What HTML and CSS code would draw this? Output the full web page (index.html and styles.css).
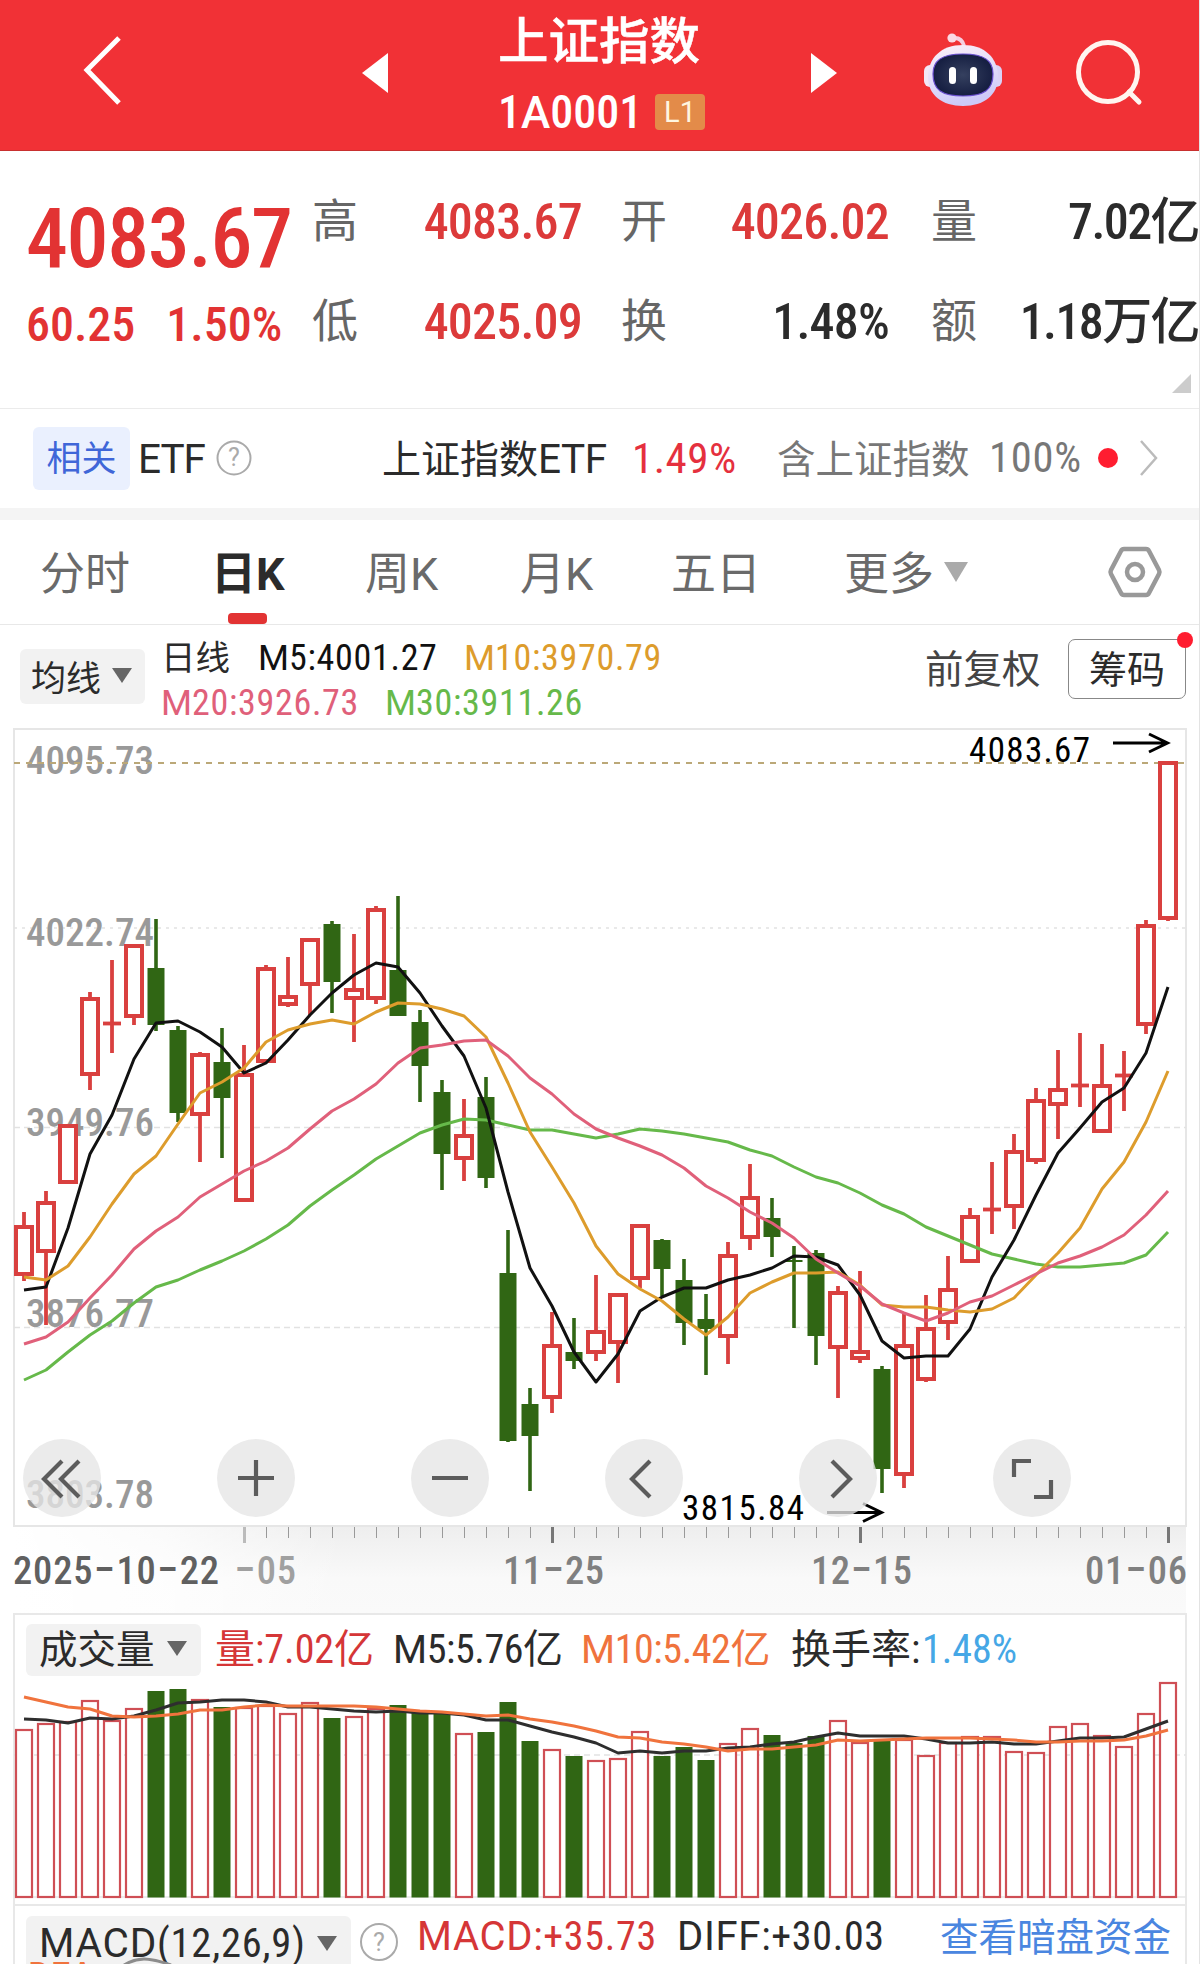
FILE: index.html
```
<!DOCTYPE html>
<html lang="zh-CN">
<head>
<meta charset="utf-8">
<title>上证指数</title>
<link rel="stylesheet" href="styles.css">
</head>
<body>
<main class="page">
  <header class="top">
    <svg class="back" viewBox="0 0 60 151"><path d="M49 38 17 70l32 33"/></svg>
    <svg class="tri" viewBox="0 0 30 151"><path d="M28 53v40L2 73z"/></svg>
    <div class="title">
      <h1>上证指数</h1>
      <div class="code"><span>1<i>A</i>0001</span><b>L1</b></div>
    </div>
    <svg class="tri" viewBox="0 0 30 151"><path d="M1 53v40l26-20z"/></svg>
    <svg class="robot" viewBox="920 30 86 80">
      <defs>
        <linearGradient id="shell" x1="0" y1="0" x2="0.3" y2="1"><stop offset="0" stop-color="#fdf0f8"/><stop offset=".6" stop-color="#e2dcfa"/><stop offset="1" stop-color="#cdcaf8"/></linearGradient>
        <radialGradient id="face"><stop offset="0" stop-color="#35405f"/><stop offset="1" stop-color="#161f42"/></radialGradient>
      </defs>
      <path d="M953 38q9-1 11 8" fill="none" stroke="#f6cfe0" stroke-width="4"/>
      <circle cx="952" cy="38" r="4.600" fill="#fbd9e4"/>
      <rect x="924" y="65" width="14" height="22" rx="6" fill="#f3e6f6"/>
      <rect x="988" y="65" width="14" height="22" rx="6" fill="#d9d2f6"/>
      <path d="M963 45c22 0 35 13 35 32 0 18-14 29-35 29s-35-11-35-29c0-19 13-32 35-32z" fill="url(#shell)"/>
      <path d="M963 54c22 0 30 7 30 20 0 16-9 22-30 22s-30-6-30-22c0-13 8-20 30-20z" fill="url(#face)" stroke="#6a4fd0" stroke-width="1.200"/>
      <rect x="949" y="67" width="7" height="17" rx="3.500" fill="#fff"/>
      <rect x="970" y="67" width="7" height="17" rx="3.500" fill="#fff"/>
    </svg>
    <svg class="search" viewBox="1070 30 76 80"><circle cx="1107" cy="72" r="29.500"/><path d="m1128 92 10 10"/></svg>
  </header>

  <section class="quote">
    <div class="last">
      <strong>4083.67</strong>
      <div class="chg"><span>60.25</span><span>1.50%</span></div>
    </div>
    <dl>
      <dt>高</dt><dd class="up">4083.67</dd>
      <dt>开</dt><dd class="up">4026.02</dd>
      <dt>量</dt><dd>7.02亿</dd>
      <dt>低</dt><dd class="up">4025.09</dd>
      <dt>换</dt><dd>1.48%</dd>
      <dt>额</dt><dd>1.18万亿</dd>
    </dl>
    <span class="corner"></span>
  </section>

  <section class="etf">
    <span class="tag">相关</span>
    <span class="name"><i>ETF</i></span>
    <svg class="help" viewBox="0 0 40 40"><circle cx="20" cy="20" r="16.500"/><text x="20" y="28">?</text></svg>
    <span class="fund">上证指数<i>ETF</i></span>
    <span class="pct">1.49%</span>
    <span class="hold">含上证指数</span>
    <span class="share">100%</span>
    <span class="dot"></span>
    <svg class="more" viewBox="0 0 20 40"><path d="m2 3 15 17L2 37"/></svg>
  </section>

  <nav class="tabs">
    <span>分时</span>
    <span class="on">日<i>K</i></span>
    <span>周<i>K</i></span>
    <span>月<i>K</i></span>
    <span>五日</span>
    <span>更多</span>
    <svg class="caret" viewBox="0 0 24 20"><path d="M0 0h24L12 20z"/></svg>
    <svg class="gear" viewBox="0 0 56 56"><path d="M17 5h22q2 0 3 2l10 19q1 2 0 4L42 49q-1 2-3 2H17q-2 0-3-2L4 30q-1-2 0-4L14 7q1-2 3-2z"/><circle cx="28" cy="28" r="8"/></svg>
  </nav>

  <section class="legend">
    <span class="chip">均线<svg viewBox="0 0 20 15"><path d="M0 0h20L10 15z"/></svg></span>
    <div class="mas">
      <span class="kind">日线</span><span class="m5"><i>M</i>5:4001.27</span><span class="m10"><i>M</i>10:3970.79</span>
      <span class="m20"><i>M</i>20:3926.73</span><span class="m30"><i>M</i>30:3911.26</span>
    </div>
    <span class="adj">前复权</span>
    <span class="chips">筹码<em></em></span>
  </section>

  <section class="chart">
    <svg id="kline" viewBox="0 726 1200 887">
      <defs>
        <linearGradient id="axis" x1="0" y1="0" x2="0" y2="1"><stop offset="0" stop-color="#eee"/><stop offset=".6" stop-color="#f9f9f9"/><stop offset="1" stop-color="#fafafa"/></linearGradient>
        <linearGradient id="fade"><stop offset="0" stop-color="#fff"/><stop offset=".45" stop-color="#fff" stop-opacity=".75"/><stop offset="1" stop-color="#fff" stop-opacity="0"/></linearGradient>
      </defs>
      <rect x="14" y="1527" width="1172" height="86" fill="url(#axis)"/>
      <rect x="14" y="1527" width="330" height="86" fill="url(#fade)"/>
      <rect class="frame" x="14" y="729" width="1172" height="797"/>
      <path class="grid" d="M14 1127.500H1186M14 1327.500H1186"/>
      <path class="grid dots" d="M14 928H1186"/>
      <g class="price">
        <text x="26" y="774" textLength="128">4095.73</text>
        <text x="26" y="946" textLength="128">4022.74</text>
        <text x="26" y="1136" textLength="128">3949.76</text>
        <text x="26" y="1327" textLength="128">3876.77</text>
        <text x="26" y="1508" textLength="128">3803.78</text>
      </g>
      <path class="top-line" d="M14 763H1186"/>
      <g id="candles"></g>
      <g class="mark">
        <text x="969" y="762" textLength="121">4083.67</text>
        <path d="M1113 743h54m-18-9 18.500 9-18.500 9"/>
        <text x="682" y="1520" textLength="122">3815.84</text>
        <path d="M827 1512.500h54m-18-9 18.500 9-18.500 9"/>
      </g>
      <g id="ticks"></g>
      <g class="date">
        <text x="13" y="1584" textLength="206" class="first">2025<tspan>-</tspan>10<tspan>-</tspan>22</text>
        <text x="234" y="1584" textLength="62" class="pale"><tspan>-</tspan>05</text>
        <text x="503" y="1584" textLength="101">11<tspan>-</tspan>25</text>
        <text x="811" y="1584" textLength="101">12<tspan>-</tspan>15</text>
        <text x="1085" y="1584" textLength="102">01<tspan>-</tspan>06</text>
      </g>
    </svg>
    <div class="controls">
      <svg viewBox="0 0 78 78"><path d="M39 22 21 40l18 18M56 22 38 40l18 18"/></svg>
      <svg viewBox="0 0 78 78"><path d="M39 21v36M21 39h36"/></svg>
      <svg viewBox="0 0 78 78"><path d="M21 39h36"/></svg>
      <svg viewBox="0 0 78 78"><path d="M45 22 27 40l18 18"/></svg>
      <svg viewBox="0 0 78 78"><path d="m33 22 18 18-18 18"/></svg>
      <svg viewBox="0 0 78 78"><path d="M21 38V22h17M58 41v17H41"/></svg>
    </div>
  </section>

  <section class="volume">
    <div class="bar">
      <span class="chip">成交量<svg viewBox="0 0 20 15"><path d="M0 0h20L10 15z"/></svg></span>
      <span class="v1">量:7.02亿</span>
      <span class="v2"><i>M</i>5:5.76亿</span>
      <span class="v3"><i>M</i>10:5.42亿</span>
      <span class="v4">换手率:</span>
      <span class="v5">1.48%</span>
    </div>
    <svg id="vol" viewBox="13 1677 1174 227"><path class="grid" d="M14 1755H1186"/><path class="base" d="M14 1897H1186"/></svg>
  </section>

  <section class="macd">
    <span class="chip"><span><i>MACD</i>(12,26,9)</span><svg viewBox="0 0 20 15"><path d="M0 0h20L10 15z"/></svg></span>
    <svg class="help" viewBox="0 0 40 40"><circle cx="20" cy="20" r="18"/><text x="20" y="29">?</text></svg>
    <span class="d1"><i>MACD</i>:+35.73</span>
    <span class="d2"><i>DIFF</i>:+30.03</span>
    <a>查看暗盘资金</a>
    <svg class="peek" viewBox="14 1955 240 9"><text x="28" y="1991">DEA</text><path d="M124 1965q10-6 20-6t27 6"/></svg>
  </section>
</main>
<script src="chart.js"></script>
</body>
</html>
```

FILE: styles.css
```
* { box-sizing: border-box; margin: 0; padding: 0; }
body {
  width: 1200px; height: 1964px; overflow: hidden; background: #fff; color: #2b2b2b;
  font-family: "Roboto Condensed", "Noto Sans CJK SC", sans-serif;
}
i { font-family: Roboto, sans-serif; font-style: normal; }
svg { display: block; flex: none; }
span { white-space: nowrap; }
.page { width: 1200px; height: 1964px; overflow: hidden; display: flex; flex-direction: column; border-right: 1px solid #e3e3e3; }
.page > * { flex: none; }

.top { height: 151px; width: 1200px; background: #f13136; display: flex; color: #fff; border-bottom: 1px solid #c8302f; }
.top svg { height: 151px; }
.back { width: 60px; margin-left: 70px; fill: none; stroke: #fff; stroke-width: 5; }
.tri { width: 30px; fill: #fff; }
.back + .tri { margin-left: 230px; }
.title { width: 220px; margin: 0 90px 0 108px; padding-right: 0; }
.title + .tri { margin-left: 2px; }
.title h1 { height: 82px; padding-top: 9px; font: 500 50.5px/56px "Noto Sans CJK SC", sans-serif; -webkit-text-stroke: 0.5px #fff; }
.code { display: flex; align-items: center; height: 60px; }
.code span { width: 157px; font-size: 46px; font-weight: 500; line-height: 62px; padding-top: 1px; }
.code i { font-size: 44px; }
.code b { width: 50px; height: 36px; border-radius: 4px; background: #e38b49; color: #fff6e0; font: 400 29px/36px Roboto, sans-serif; text-align: center; }
.top .robot { width: 86px; height: 80px; margin: 30px 0 0 80px; }
.top .search { width: 76px; height: 80px; margin: 30px 0 0 65px; fill: none; stroke: #fff5f0; stroke-width: 5; stroke-linecap: round; }

.quote { height: 258px; display: flex; position: relative; border-bottom: 1px solid #ebebeb; }
.last { width: 312px; padding: 46px 0 0 26px; color: #e23333; }
.last strong { display: block; font-size: 84px; font-weight: 500; line-height: 84px; letter-spacing: -1.4px; }
.chg { display: flex; gap: 31px; padding-top: 12px; font-size: 48px; font-weight: 500; line-height: 64px; }
.quote dl { width: 886px; display: grid; grid-template-columns: 45px 225px 85px 222px 88px 222px; grid-template-rows: 100px 100px; padding-top: 22px; }
.quote dt { font-size: 46px; color: #666; line-height: 88px; font-family: "Noto Sans CJK SC", sans-serif; text-align: right; }
.quote dd { font-size: 50px; font-weight: 500; line-height: 98px; text-align: right; letter-spacing: -0.8px; white-space: nowrap; }
.quote dd:nth-of-type(3n) { letter-spacing: -1.6px; }
.quote .up { color: #dc3a3a; }
.corner { position: absolute; right: 8px; bottom: 15px; border-style: solid; border-width: 0 0 19px 19px; border-color: transparent transparent #ccc; }

.etf { height: 111px; display: flex; align-items: center; padding: 0 0 1px 33px; border-bottom: 12px solid #f4f4f4; font-size: 39px; line-height: 60px; }
.tag { width: 97px; height: 63px; border-radius: 6px; background: #eaf0fe; color: #3f66d8; font-size: 35px; line-height: 66px; text-align: center; }
.name { width: 84px; padding: 2px 0 0 8px; font-size: 40.5px; letter-spacing: -1px; }
.help { width: 40px; height: 40px; fill: none; stroke: #aaa; stroke-width: 2; }
.help text { font-size: 25px; font-family: Roboto, sans-serif; text-anchor: middle; fill: #aaa; stroke: none; }
.fund { margin-left: 128px; width: 250px; padding-top: 3px; font-size: 39px; }
.fund i { font-size: 40.5px; letter-spacing: -0.4px; }
.pct { width: 145px; color: #e5303e; font-size: 43px; letter-spacing: 0.5px; }
.hold { width: 212px; padding-top: 3px; color: #777; font-size: 38.5px; }
.share { width: 109px; color: #777; font-size: 42.500px; letter-spacing: 0.8px; }
.dot { width: 20px; height: 20px; border-radius: 50%; background: #ff1d30; }
.more { width: 20px; height: 40px; margin-left: 21px; fill: none; stroke: #bbb; stroke-width: 2.5; }

.tabs { height: 105px; display: grid; grid-template-columns: 171px 154px 155px 151px 173px 100px 163px 56px; align-items: center; padding-left: 40px; border-bottom: 1px solid #e8e8e8; color: #6a6a6a; font-size: 45px; line-height: 109px; }
.tabs i { font-size: 45px; }
.tabs span { height: 104px; }
.tabs .on { position: relative; color: #2b2b2b; font-weight: 700; }
.tabs .on::after { content: ""; position: absolute; left: 17px; bottom: 0; width: 39px; height: 11px; border-radius: 4px; background: #e23333; }
.caret { width: 24px; height: 20px; fill: #aaa; }
.gear { width: 56px; height: 56px; fill: none; stroke: #999; stroke-width: 4.5; }

.legend { height: 101px; display: flex; padding-left: 20px; }
.chip { display: flex; align-items: center; justify-content: space-between; border-radius: 6px; background: #f2f2f2; }
.chip svg { width: 20px; height: 15px; fill: #666; }
.legend .chip { width: 125px; height: 55px; margin-top: 24px; padding: 0 13px 2px 11px; font-size: 35px; }
.mas { width: 525px; margin-left: 16px; padding-top: 11px; display: flex; flex-wrap: wrap; font-size: 36px; line-height: 45px; letter-spacing: 0.7px; height: 101px; align-content: flex-start; }
.mas i { font-size: 35.5px; letter-spacing: 0; }
.kind { width: 97px; font-size: 34.5px; letter-spacing: 0; }
.m5 { width: 206px; color: #111; }
.m10 { width: 215px; color: #dd9c2c; }
.m20 { width: 224px; color: #e0607a; }
.m30 { width: 215px; color: #66b94a; }
.adj { margin-left: 239px; width: 143px; font-size: 38.5px; line-height: 90px; color: #444; }
.chips { position: relative; width: 118px; height: 60px; margin-top: 14px; border: 1.5px solid #888; border-radius: 7px; font-size: 38px; line-height: 61px; text-align: center; }
.chips em { position: absolute; right: -8px; top: -8px; width: 16px; height: 16px; border-radius: 50%; background: #ff1d30; }

.chart { position: relative; height: 887px; }
#kline { width: 1200px; height: 887px; }
svg text { font-family: "Roboto Condensed", sans-serif; }
.frame { fill: none; stroke: #e6e6e6; stroke-width: 2; }
.grid { fill: none; stroke: #e2e2e2; stroke-width: 1.3; stroke-dasharray: 6 4; }
.dots { stroke-dasharray: 3 5; }
.top-line { stroke: #bba878; stroke-width: 1.8; stroke-dasharray: 6 6; }
.price text { font-size: 39px; font-weight: 500; fill: #999; }
.mark text { font-size: 35px; fill: #000; }
.mark path { fill: none; stroke: #000; stroke-width: 3; }
.date text { font-size: 38.5px; font-weight: 500; fill: #808080; }
.date tspan { font-family: Inter, sans-serif; font-size: 48px; font-weight: 400; }
.date .first { fill: #606060; }
.date .pale { fill: #a0a0a0; }
.controls { position: absolute; left: 23px; top: 713px; display: flex; gap: 116px; }
.controls svg { width: 78px; height: 78px; border-radius: 50%; background: rgba(230, 230, 230, 0.78); fill: none; stroke: #5c5c5c; stroke-width: 4.2; }

.ma { fill: none; stroke-width: 3; stroke-linejoin: round; }
.c-black { stroke: #111; }
.c-ink { stroke: #2e2e2e; }
.c-gold { stroke: #dd9c2c; }
.c-pink { stroke: #e0607a; }
.c-green { stroke: #66b94a; }
.c-orange { stroke: #f0733d; }
.rise { fill: #fff; stroke: #d9403f; stroke-width: 4; }
.rise-wick { stroke: #d9403f; stroke-width: 3.8; }
.fall { fill: #306614; }
.fall-wick { stroke: #306614; stroke-width: 3.6; }
.vol-rise { fill: #fff; stroke: #cf4f55; stroke-width: 2.2; }

.volume { width: 1174px; height: 291px; margin-left: 13px; border: solid #e8e8e8; border-width: 2px 2px 0 2px; }
.bar { height: 64px; display: flex; align-items: center; padding: 6px 0 0 11px; font-size: 40px; line-height: 62px; }
.bar .chip { width: 175px; height: 52px; padding: 0 14px 0 13px; font-size: 38.5px; line-height: 52px; }
.bar .chip svg { margin-bottom: 3px; }
.bar i { font-size: 39px; }
.v1 { margin-left: 14px; width: 178px; color: #d53637; }
.v2 { width: 188px; letter-spacing: -0.4px; }
.v3 { width: 210px; color: #f0733d; letter-spacing: -0.4px; }
.v4 { width: 131px; }
.v5 { color: #45a7e6; }
#vol { width: 1174px; height: 227px; margin: -2px 0 0 -2px; }
.base { stroke: #e6e6e6; stroke-width: 1.3; }

.macd { position: relative; width: 1174px; height: 60px; margin-left: 13px; border: solid #e8e8e8; border-width: 2px 2px 0 2px; display: flex; padding-left: 11px; font-size: 40px; line-height: 62px; }
.macd .chip { width: 325px; height: 60px; margin-top: 10px; padding: 0 14px 5px 13px; font-size: 40.5px; line-height: 55px; letter-spacing: 0.8px; }
.macd .chip svg { margin-bottom: 1px; }
.macd .help { margin: 16px 0 0 8px; }
.d1 { margin-left: 18px; width: 260px; color: #d53637; letter-spacing: 0.7px; }
.d2 { width: 263px; letter-spacing: 0.7px; }
.macd a { color: #4a86e0; font-size: 38.5px; line-height: 63px; white-space: nowrap; }
.peek { position: absolute; left: -1px; bottom: 0; width: 240px; height: 9px; }
.peek text { font-size: 40px; font-weight: 500; fill: #f0733d; }
.peek path { fill: none; stroke: #8c8c8c; stroke-width: 3; }
```

FILE: chart.js
```
const NS = 'http://www.w3.org/2000/svg';
const X = i => 24 + 22 * i;

function add(parent, tag, attrs) {
  const el = document.createElementNS(NS, tag);
  for (const k in attrs) el.setAttribute(k, attrs[k]);
  parent.appendChild(el);
}

// One row per trading day: direction, high, body top, body bottom, low
const days = `r1212,1225,1276,1281 r1191,1201,1253,1325 r1124,1124,1184,1184 r992,997,1076,1090 r960,1021,1026,1053
r944,944,1018,1025 g919,968,1025,1031 g1026,1030,1113,1122 r1052,1053,1116,1162 g1028,1062,1098,1158
r1045,1073,1202,1202 r965,967,1063,1063 r957,995,1006,1007 r938,938,986,1015 g921,924,982,1013
r934,988,1000,1042 r906,908,1000,1004 g896,970,1016,1016 g1010,1022,1066,1102 g1080,1092,1154,1190
r1099,1134,1160,1181 g1077,1097,1178,1188 g1230,1273,1441,1442 g1388,1404,1436,1491 r1312,1344,1399,1413
g1318,1352,1361,1369 r1275,1330,1354,1361 r1293,1293,1344,1383 r1224,1224,1280,1288 g1239,1240,1269,1296
g1259,1280,1323,1345 g1294,1319,1329,1375 r1242,1254,1338,1364 r1164,1196,1239,1250 g1198,1218,1237,1257
g1246,1260,1262,1328 g1250,1253,1336,1365 r1286,1291,1349,1398 r1271,1350,1360,1363 g1366,1369,1469,1493
r1313,1344,1476,1488 r1295,1327,1381,1382 r1256,1288,1324,1340 r1208,1215,1263,1263 r1162,1207,1212,1234
r1134,1150,1208,1229 r1088,1099,1162,1164 r1050,1088,1106,1139 r1033,1084,1087,1107 r1044,1084,1133,1133
r1051,1074,1077,1111 r920,924,1026,1034 r761,761,920,921`.split(/\s+/)
  .map(s => ({ up: s[0] === 'r', v: s.slice(1).split(',').map(Number) }));

const candles = document.getElementById('candles');
days.forEach(({ up, v: [hi, top, bot, lo] }, i) => {
  const x = X(i);
  const wick = up ? 'rise-wick' : 'fall-wick';
  if (hi < top) add(candles, 'path', { class: wick, d: `M${x} ${hi}V${top + 1}` });
  if (lo > bot) add(candles, 'path', { class: wick, d: `M${x} ${bot - 1}V${lo}` });
  if (!up) add(candles, 'rect', { class: 'fall', x: x - 8.5, y: top, width: 17, height: bot - top });
  else if (bot - top < 7) add(candles, 'path', { class: 'rise-wick', d: `M${x - 9} ${(top + bot) / 2}h18` });
  else add(candles, 'rect', { class: 'rise', x: x - 8, y: top + 2, width: 16, height: bot - top - 4 });
});

function line(parent, cls, ys) {
  add(parent, 'polyline', { class: 'ma ' + cls, points: ys.map((y, i) => X(i) + ',' + y).join(' ') });
}
line(candles, 'c-green', [1380,1370,1352,1335,1321,1303,1287,1280,1270,1261,1251,1239,1225,1206,1190,1175,1159,1146,1133,1125,1119,1120,1125,1130,1130,1134,1138,1134,1129,1131,1134,1138,1142,1150,1156,1167,1177,1183,1193,1205,1214,1227,1236,1245,1254,1259,1264,1267,1267,1265,1263,1255,1232]);
line(candles, 'c-black', [1290,1287,1228,1154,1115,1059,1023,1021,1032,1047,1073,1063,1040,1015,993,975,963,967,993,1026,1056,1108,1192,1268,1306,1352,1382,1354,1311,1297,1288,1288,1280,1275,1268,1256,1257,1265,1295,1341,1358,1356,1356,1329,1277,1240,1195,1153,1128,1102,1088,1053,987]);
line(candles, 'c-gold', [1277,1280,1266,1237,1204,1174,1156,1124,1093,1082,1068,1042,1030,1024,1020,1024,1012,1003,1004,1009,1016,1037,1083,1132,1167,1203,1246,1274,1289,1301,1319,1335,1317,1293,1282,1273,1273,1272,1285,1305,1307,1307,1310,1312,1309,1298,1275,1253,1228,1189,1162,1122,1071]);
line(candles, 'c-pink', [1344,1337,1322,1298,1275,1249,1231,1217,1197,1184,1171,1161,1148,1129,1111,1099,1084,1063,1048,1045,1041,1040,1056,1078,1094,1114,1129,1138,1146,1155,1168,1186,1198,1212,1223,1238,1259,1273,1286,1304,1313,1321,1313,1302,1296,1285,1274,1263,1256,1247,1235,1215,1191]);

// Date axis ticks, with a long tick above each date
const ticks = document.getElementById('ticks');
for (let i = 10; i < 53; i++) {
  const big = (i - 10) % 14 === 0;
  add(ticks, 'path', { d: `M${X(i) + 0.5} 1527v${big ? 16 : 11}`, stroke: i === 10 ? '#bbb' : big ? '#777' : '#999', 'stroke-width': big ? 3 : 1 });
}

const vol = document.getElementById('vol');
const tops = [1729,1723,1721,1700,1720,1708,1691,1689,1699,1707,1707,1705,1713,1702,1718,1716,1708,1705,1712,1713,1733,1732,1702,1741,1749,1756,1760,1758,1731,1756,1747,1760,1743,1728,1735,1743,1736,1720,1742,1739,1739,1755,1742,1736,1736,1751,1752,1726,1723,1735,1746,1713,1682];
tops.forEach((t, i) => {
  const x = X(i);
  if (days[i].up) add(vol, 'rect', { class: 'vol-rise', x: x - 8, y: t + 1, width: 16, height: 1896 - t });
  else add(vol, 'rect', { class: 'fall', x: x - 8.5, y: t, width: 17, height: 1897.5 - t });
});
line(vol, 'c-ink', [1719,1720,1723,1718,1719,1716,1710,1703,1702,1700,1700,1702,1707,1707,1709,1711,1712,1711,1713,1713,1715,1720,1720,1726,1732,1737,1743,1753,1751,1753,1751,1751,1748,1747,1744,1742,1737,1733,1736,1736,1736,1739,1743,1743,1742,1744,1744,1741,1738,1738,1737,1729,1721]);
line(vol, 'c-orange', [1697,1702,1707,1709,1716,1717,1716,1714,1710,1710,1707,1705,1706,1706,1706,1706,1707,1709,1711,1712,1714,1716,1715,1719,1722,1726,1731,1737,1738,1742,1744,1747,1751,1749,1749,1747,1745,1740,1741,1740,1739,1738,1738,1738,1739,1740,1742,1742,1741,1741,1740,1736,1730]);
```
